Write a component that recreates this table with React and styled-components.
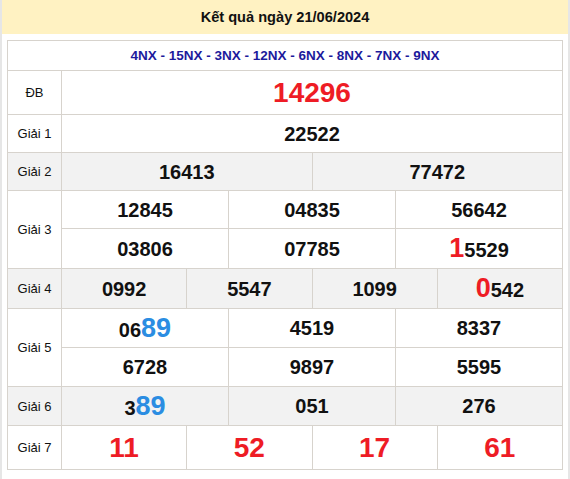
import React from "react";
import styled, { createGlobalStyle } from "styled-components";

const Global = createGlobalStyle`
  html, body { margin: 0; padding: 0; background: #e6e6e6; }
  body { font-family: "Liberation Sans", Arial, sans-serif; }
`;

const Page = styled.div`
  margin: 0 2px;
  min-height: 100vh;
  background: #ffffff;
  display: flex;
  flex-direction: column;
`;

const Title = styled.div`
  height: 34px;
  background: #fff2c2;
  display: flex;
  align-items: center;
  justify-content: center;
  font-size: 14.6px;
  font-weight: bold;
  color: #111;
`;

const Grid = styled.div`
  margin: 6px 5px 0 5px;
  display: grid;
  grid-template-columns: 53px repeat(12, 1fr);
  grid-template-rows: 29px 43px 37px 37px 37px 39px 39px 38px 38px 38px 43px;
  gap: 1px;
  padding: 1px;
  background: #d7d3cd;
`;

const Cell = styled.div`
  grid-column: span ${(p) => p.$span || 1};
  grid-row: span ${(p) => p.$rows || 1};
  background: ${(p) => (p.$alt ? "#f2f2f2" : "#ffffff")};
  display: flex;
  align-items: center;
  justify-content: center;
  min-width: 0;
`;

const CodeCell = styled(Cell)`
  font-size: 13.5px;
  font-weight: bold;
  color: #1c1a9c;
`;

const Label = styled(Cell)`
  font-size: 13px;
  color: #111;
`;

const Num = styled.span`
  font-weight: bold;
  font-size: ${(p) => (p.$big ? "28px" : "20px")};
  color: ${(p) => (p.$big ? "#ee1c25" : "#111")};
  line-height: 1;
`;

const Hl = styled.span`
  font-size: 27px;
  color: ${(p) => (p.$c === "blue" ? "#2b8de2" : "#ee1c25")};
`;

const rows = [
  { label: "ĐB", rows: 1, alt: false, lines: [[{ v: "14296", big: true }]] },
  { label: "Giải 1", rows: 1, alt: false, lines: [[{ v: "22522" }]] },
  { label: "Giải 2", rows: 1, alt: true, lines: [[{ v: "16413" }, { v: "77472" }]] },
  {
    label: "Giải 3",
    rows: 2,
    alt: false,
    lines: [
      [{ v: "12845" }, { v: "04835" }, { v: "56642" }],
      [{ v: "03806" }, { v: "07785" }, { v: "5529", pre: "1", c: "red" }],
    ],
  },
  {
    label: "Giải 4",
    rows: 1,
    alt: true,
    lines: [[{ v: "0992" }, { v: "5547" }, { v: "1099" }, { v: "542", pre: "0", c: "red" }]],
  },
  {
    label: "Giải 5",
    rows: 2,
    alt: false,
    lines: [
      [{ v: "06", post: "89", c: "blue" }, { v: "4519" }, { v: "8337" }],
      [{ v: "6728" }, { v: "9897" }, { v: "5595" }],
    ],
  },
  {
    label: "Giải 6",
    rows: 1,
    alt: true,
    lines: [[{ v: "3", post: "89", c: "blue" }, { v: "051" }, { v: "276" }]],
  },
  {
    label: "Giải 7",
    rows: 1,
    alt: false,
    lines: [[{ v: "11", big: true }, { v: "52", big: true }, { v: "17", big: true }, { v: "61", big: true }]],
  },
];

function Number({ n }) {
  return (
    <Num $big={n.big}>
      {n.pre && <Hl $c={n.c}>{n.pre}</Hl>}
      {n.v}
      {n.post && <Hl $c={n.c}>{n.post}</Hl>}
    </Num>
  );
}

export default function App() {
  return (
    <>
      <Global />
      <Page>
        <Title>Kết quả ngày 21/06/2024</Title>
        <Grid>
          <CodeCell $span={13}>4NX - 15NX - 3NX - 12NX - 6NX - 8NX - 7NX - 9NX</CodeCell>
          {rows.map((r) =>
            r.lines.map((line, li) => (
              <React.Fragment key={r.label + li}>
                {li === 0 && (
                  <Label $rows={r.rows} $alt={r.alt}>
                    {r.label}
                  </Label>
                )}
                {line.map((n, i) => (
                  <Cell key={i} $span={12 / line.length} $alt={r.alt}>
                    <Number n={n} />
                  </Cell>
                ))}
              </React.Fragment>
            ))
          )}
        </Grid>
      </Page>
    </>
  );
}
